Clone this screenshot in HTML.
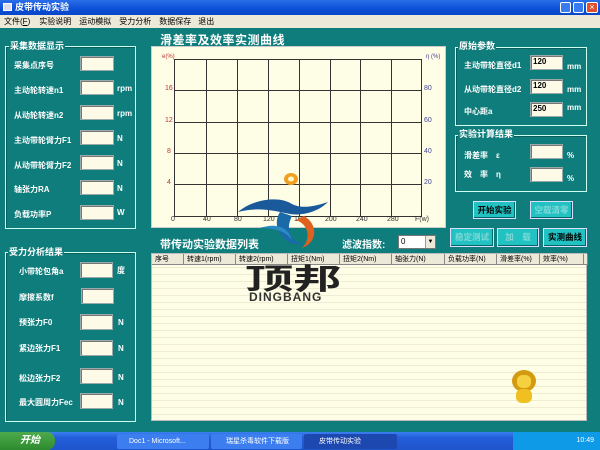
<!DOCTYPE html>
<html><head><meta charset="utf-8"><style>
*{margin:0;padding:0;box-sizing:border-box}
body{width:600px;height:450px;overflow:hidden;position:relative;background:#0f7d7b;font-family:"Liberation Sans","Noto Sans CJK SC",sans-serif;font-size:8px;color:#fff}
.a{position:absolute}
.tb{left:0;top:0;width:600px;height:15px;background:linear-gradient(#2b6ee8,#0a4fd6 60%,#0846c8);}
.mb{left:0;top:15px;width:600px;height:13px;background:#ece9d8;color:#000;font-size:8px;line-height:13px}
.gb{border:1px solid #cfe;box-shadow:inset 1px 1px 0 #0a5e5c}
.gt{background:#0f7d7b;font-weight:bold;font-size:9px;padding:0 1px;line-height:10px}
.lb{font-weight:bold;font-size:8px;white-space:nowrap}
.in{background:#fdfbe8;border:1px solid #9aa;box-shadow:inset 1px 1px 0 #777;color:#000;font-size:8px;font-weight:bold;padding-left:2px;line-height:12px}
.un{font-weight:bold;font-size:8px}
.bt{background:#22c2c2;border:1px solid #ddf;box-shadow:inset -1px -1px 0 #066;font-size:8.5px;font-weight:bold;text-align:center;color:#000}
.bt.d{color:#7fd8d8}
.gl{background:#333}
.th{position:absolute;top:0;height:11px;border-right:1px solid #888;border-bottom:1px solid #888;background:#ece9d8;color:#000;font-size:7px;line-height:11px;padding-left:3px;white-space:nowrap}
</style></head><body>
<div class="a tb"></div>
<div class="a" style="left:3px;top:3px;width:9px;height:8px;background:#dde;border:1px solid #fff"></div>
<div class="a" style="left:15px;top:1px;font-size:9px;font-weight:bold;line-height:13px">皮带传动实验</div>
<div class="a" style="left:560px;top:2px;width:11px;height:11px;background:#3a7cf0;border:1px solid #fff;border-radius:2px"></div>
<div class="a" style="left:573px;top:2px;width:11px;height:11px;background:#3a7cf0;border:1px solid #fff;border-radius:2px"></div>
<div class="a" style="left:586px;top:2px;width:12px;height:11px;background:#e0502a;border:1px solid #fff;border-radius:2px;font-size:9px;text-align:center;line-height:9px">×</div>
<div class="a mb"><span style="margin-left:4px">文件(<u>F</u>)</span><span style="margin-left:9px">实验说明</span><span style="margin-left:8px">运动模拟</span><span style="margin-left:8px">受力分析</span><span style="margin-left:8px">数据保存</span><span style="margin-left:7px">退出</span></div>

<div class="a gb" style="left:5px;top:46px;width:131px;height:183px"></div>
<div class="a gt" style="left:9px;top:41px">采集数据显示</div>
<div class="a lb" style="left:14px;top:60px">采集点序号</div>
<div class="a lb" style="left:14px;top:85px">主动轮转速n1</div>
<div class="a lb" style="left:14px;top:110px">从动轮转速n2</div>
<div class="a lb" style="left:14px;top:135px">主动带轮臂力F1</div>
<div class="a lb" style="left:14px;top:160px">从动带轮臂力F2</div>
<div class="a lb" style="left:14px;top:184px">轴张力RA</div>
<div class="a lb" style="left:14px;top:209px">负载功率P</div>
<div class="a in" style="left:80px;top:56px;width:34px;height:15px"></div>
<div class="a in" style="left:80px;top:80px;width:34px;height:15px"></div>
<div class="a in" style="left:80px;top:105px;width:34px;height:15px"></div>
<div class="a in" style="left:80px;top:130px;width:34px;height:15px"></div>
<div class="a in" style="left:80px;top:155px;width:34px;height:15px"></div>
<div class="a in" style="left:80px;top:180px;width:34px;height:15px"></div>
<div class="a in" style="left:80px;top:205px;width:34px;height:15px"></div>
<div class="a un" style="left:117px;top:84px">rpm</div>
<div class="a un" style="left:117px;top:109px">rpm</div>
<div class="a un" style="left:117px;top:134px">N</div>
<div class="a un" style="left:117px;top:159px">N</div>
<div class="a un" style="left:117px;top:184px">N</div>
<div class="a un" style="left:117px;top:208px">W</div>

<div class="a gb" style="left:5px;top:252px;width:131px;height:170px"></div>
<div class="a gt" style="left:8px;top:247px">受力分析结果</div>
<div class="a lb" style="left:19px;top:266px">小带轮包角a</div>
<div class="a lb" style="left:19px;top:292px">摩擦系数f</div>
<div class="a lb" style="left:19px;top:317px">预张力F0</div>
<div class="a lb" style="left:19px;top:343px">紧边张力F1</div>
<div class="a lb" style="left:19px;top:373px">松边张力F2</div>
<div class="a lb" style="left:19px;top:397px">最大圆周力Fec</div>
<div class="a in" style="left:80px;top:262px;width:33px;height:16px"></div>
<div class="a in" style="left:81px;top:288px;width:33px;height:16px"></div>
<div class="a in" style="left:80px;top:314px;width:33px;height:16px"></div>
<div class="a in" style="left:80px;top:340px;width:33px;height:16px"></div>
<div class="a in" style="left:80px;top:368px;width:33px;height:16px"></div>
<div class="a in" style="left:80px;top:393px;width:33px;height:16px"></div>
<div class="a un" style="left:117px;top:265px">度</div>
<div class="a un" style="left:118px;top:318px">N</div>
<div class="a un" style="left:118px;top:344px">N</div>
<div class="a un" style="left:118px;top:373px">N</div>
<div class="a un" style="left:118px;top:398px">N</div>

<div class="a" style="left:160px;top:31px;font-size:12px;font-weight:bold;letter-spacing:0.5px">滑差率及效率实测曲线</div>
<div class="a" style="left:151px;top:46px;width:295px;height:182px;background:#fefde6;border:1px solid #ccc"></div>
<div class="a gl" style="left:174px;top:59px;width:1px;height:158px"></div>
<div class="a gl" style="left:206px;top:59px;width:1px;height:158px"></div>
<div class="a gl" style="left:237px;top:59px;width:1px;height:158px"></div>
<div class="a gl" style="left:268px;top:59px;width:1px;height:158px"></div>
<div class="a gl" style="left:299px;top:59px;width:1px;height:158px"></div>
<div class="a gl" style="left:330px;top:59px;width:1px;height:158px"></div>
<div class="a gl" style="left:360px;top:59px;width:1px;height:158px"></div>
<div class="a gl" style="left:391px;top:59px;width:1px;height:158px"></div>
<div class="a gl" style="left:421px;top:59px;width:1px;height:158px"></div>
<div class="a gl" style="left:174px;top:59px;width:248px;height:1px"></div>
<div class="a gl" style="left:174px;top:90px;width:248px;height:1px"></div>
<div class="a gl" style="left:174px;top:122px;width:248px;height:1px"></div>
<div class="a gl" style="left:174px;top:153px;width:248px;height:1px"></div>
<div class="a gl" style="left:174px;top:184px;width:248px;height:1px"></div>
<div class="a gl" style="left:174px;top:216px;width:248px;height:1px"></div>
<div class="a" style="color:#b33;font-size:6px;left:162px;top:54px">e(%)</div>
<div class="a" style="color:#b33;font-size:7px;left:165px;top:85px">16</div>
<div class="a" style="color:#b33;font-size:7px;left:165px;top:117px">12</div>
<div class="a" style="color:#b33;font-size:7px;left:167px;top:148px">8</div>
<div class="a" style="color:#b33;font-size:7px;left:167px;top:179px">4</div>
<div class="a" style="color:#449;font-size:6px;left:426px;top:54px">η (%)</div>
<div class="a" style="color:#449;font-size:7px;left:424px;top:85px">80</div>
<div class="a" style="color:#449;font-size:7px;left:424px;top:117px">60</div>
<div class="a" style="color:#449;font-size:7px;left:424px;top:148px">40</div>
<div class="a" style="color:#449;font-size:7px;left:424px;top:179px">20</div>
<div class="a" style="color:#333;font-size:7px;top:216px;left:171px">0</div>
<div class="a" style="color:#333;font-size:7px;top:216px;left:203px">40</div>
<div class="a" style="color:#333;font-size:7px;top:216px;left:234px">80</div>
<div class="a" style="color:#333;font-size:7px;top:216px;left:263px">120</div>
<div class="a" style="color:#333;font-size:7px;top:216px;left:294px">160</div>
<div class="a" style="color:#333;font-size:7px;top:216px;left:325px">200</div>
<div class="a" style="color:#333;font-size:7px;top:216px;left:356px">240</div>
<div class="a" style="color:#333;font-size:7px;top:216px;left:387px">280</div>
<div class="a" style="color:#333;font-size:7px;top:216px;left:415px">F(w)</div>

<div class="a gb" style="left:455px;top:47px;width:132px;height:79px"></div>
<div class="a gt" style="left:458px;top:41px">原始参数</div>
<div class="a lb" style="left:464px;top:60px">主动带轮直径d1</div>
<div class="a lb" style="left:464px;top:84px">从动带轮直径d2</div>
<div class="a lb" style="left:464px;top:106px">中心距a</div>
<div class="a in" style="left:530px;top:55px;width:33px;height:15px">120</div>
<div class="a in" style="left:530px;top:79px;width:33px;height:15px">120</div>
<div class="a in" style="left:530px;top:102px;width:33px;height:15px">250</div>
<div class="a un" style="left:567px;top:62px">mm</div>
<div class="a un" style="left:567px;top:85px">mm</div>
<div class="a un" style="left:567px;top:103px">mm</div>
<div class="a gb" style="left:455px;top:135px;width:132px;height:57px"></div>
<div class="a gt" style="left:458px;top:129px">实验计算结果</div>
<div class="a lb" style="left:464px;top:150px">滑差率　ε</div>
<div class="a lb" style="left:464px;top:169px">效　率　η</div>
<div class="a in" style="left:530px;top:144px;width:33px;height:15px"></div>
<div class="a in" style="left:530px;top:167px;width:33px;height:15px"></div>
<div class="a un" style="left:567px;top:151px">%</div>
<div class="a un" style="left:567px;top:174px">%</div>
<div class="a bt" style="left:473px;top:201px;width:43px;height:18px;line-height:16px">开始实验</div>
<div class="a bt d" style="left:530px;top:201px;width:43px;height:18px;line-height:16px">空载清零</div>
<div class="a bt d" style="left:450px;top:228px;width:44px;height:19px;line-height:17px">稳定测试</div>
<div class="a bt d" style="left:497px;top:228px;width:42px;height:19px;line-height:17px">加　载</div>
<div class="a bt" style="left:543px;top:228px;width:44px;height:19px;line-height:17px">实测曲线</div>

<div class="a" style="left:160px;top:236px;font-size:11px;font-weight:bold">带传动实验数据列表</div>
<div class="a" style="left:342px;top:236px;font-size:10px;font-weight:bold">滤波指数:</div>
<div class="a" style="left:398px;top:235px;width:38px;height:14px;background:#fff;border:1px solid #777;color:#000;font-size:8px;padding-left:2px;line-height:12px">0<span style="position:absolute;right:0;top:0;width:10px;height:12px;background:#ece9d8;border-left:1px solid #999;font-size:6px;text-align:center">▼</span></div>
<div class="a" style="left:151px;top:253px;width:436px;height:168px;background:repeating-linear-gradient(#fefde6 0 6px,#eeecd2 6px 7px);border:1px solid #bbb">
<div class="th" style="left:0;width:32px">序号</div>
<div class="th" style="left:32px;width:52px">转速1(rpm)</div>
<div class="th" style="left:84px;width:52px">转速2(rpm)</div>
<div class="th" style="left:136px;width:52px">扭矩1(Nm)</div>
<div class="th" style="left:188px;width:52px">扭矩2(Nm)</div>
<div class="th" style="left:240px;width:53px">轴张力(N)</div>
<div class="th" style="left:293px;width:52px">负载功率(N)</div>
<div class="th" style="left:345px;width:43px">滑差率(%)</div>
<div class="th" style="left:388px;width:44px">效率(%)</div>
<div class="th" style="left:432px;width:4px"></div>
</div>

<svg class="a" style="left:230px;top:168px" width="100" height="90" viewBox="0 0 100 90">
<ellipse cx="61" cy="11" rx="7" ry="6" fill="#f0a020"/><ellipse cx="61" cy="11" rx="3" ry="2.5" fill="#fff8d0"/>
<path d="M8 44 C25 30 50 28 62 36 C70 40 80 40 98 34 C88 44 72 48 60 46 C48 44 30 38 8 44Z" fill="#1a5a9a"/>
<path d="M50 44 C40 60 55 80 75 76 C60 74 55 62 62 48Z" fill="#1a6aa8"/>
<path d="M66 52 C78 56 82 70 72 80 C88 74 88 56 74 48Z" fill="#e06020"/>
<path d="M30 60 C45 55 58 58 62 72 C55 62 42 60 30 60Z" fill="#2a8ac8"/>
</svg>
<div class="a" style="left:245px;top:262px;width:68px;font-size:34px;font-weight:bold;color:#222;line-height:36px;font-family:'Noto Sans CJK SC',sans-serif;transform:scale(1.42,0.85);transform-origin:0 0;white-space:nowrap">顶邦</div>
<div class="a" style="left:249px;top:290px;font-size:12px;font-weight:bold;color:#333;letter-spacing:1px">DINGBANG</div>
<div class="a" style="left:512px;top:370px;width:24px;height:22px;border-radius:50%;background:#d49a10"></div>
<div class="a" style="left:517px;top:375px;width:14px;height:13px;border-radius:40%;background:#f5d040"></div>
<div class="a" style="left:516px;top:389px;width:16px;height:14px;border-radius:40%;background:#f0c020"></div>

<div class="a" style="left:0;top:432px;width:600px;height:18px;background:linear-gradient(#3a80f0,#245edb 30%,#1f55cc)"></div>
<div class="a" style="left:0;top:432px;width:55px;height:18px;background:linear-gradient(#4caa4c,#2e8a2e);border-radius:0 8px 8px 0;font-style:italic;font-weight:bold;font-size:10px;line-height:18px;padding-left:20px">开始</div>
<div class="a" style="left:117px;top:434px;width:92px;height:15px;background:#3c7ef0;border-radius:2px;font-size:7px;line-height:15px;padding-left:12px">Doc1 - Microsoft...</div>
<div class="a" style="left:211px;top:434px;width:91px;height:15px;background:#3c7ef0;border-radius:2px;font-size:7px;line-height:15px;padding-left:15px">瑞星杀毒软件下载版</div>
<div class="a" style="left:304px;top:434px;width:93px;height:15px;background:#1c48b0;border-radius:2px;font-size:7px;line-height:15px;padding-left:15px">皮带传动实验</div>
<div class="a" style="left:513px;top:432px;width:87px;height:18px;background:#0f9ae8;font-size:7px;line-height:18px;text-align:right;padding-right:6px">10:49</div>
</body></html>
